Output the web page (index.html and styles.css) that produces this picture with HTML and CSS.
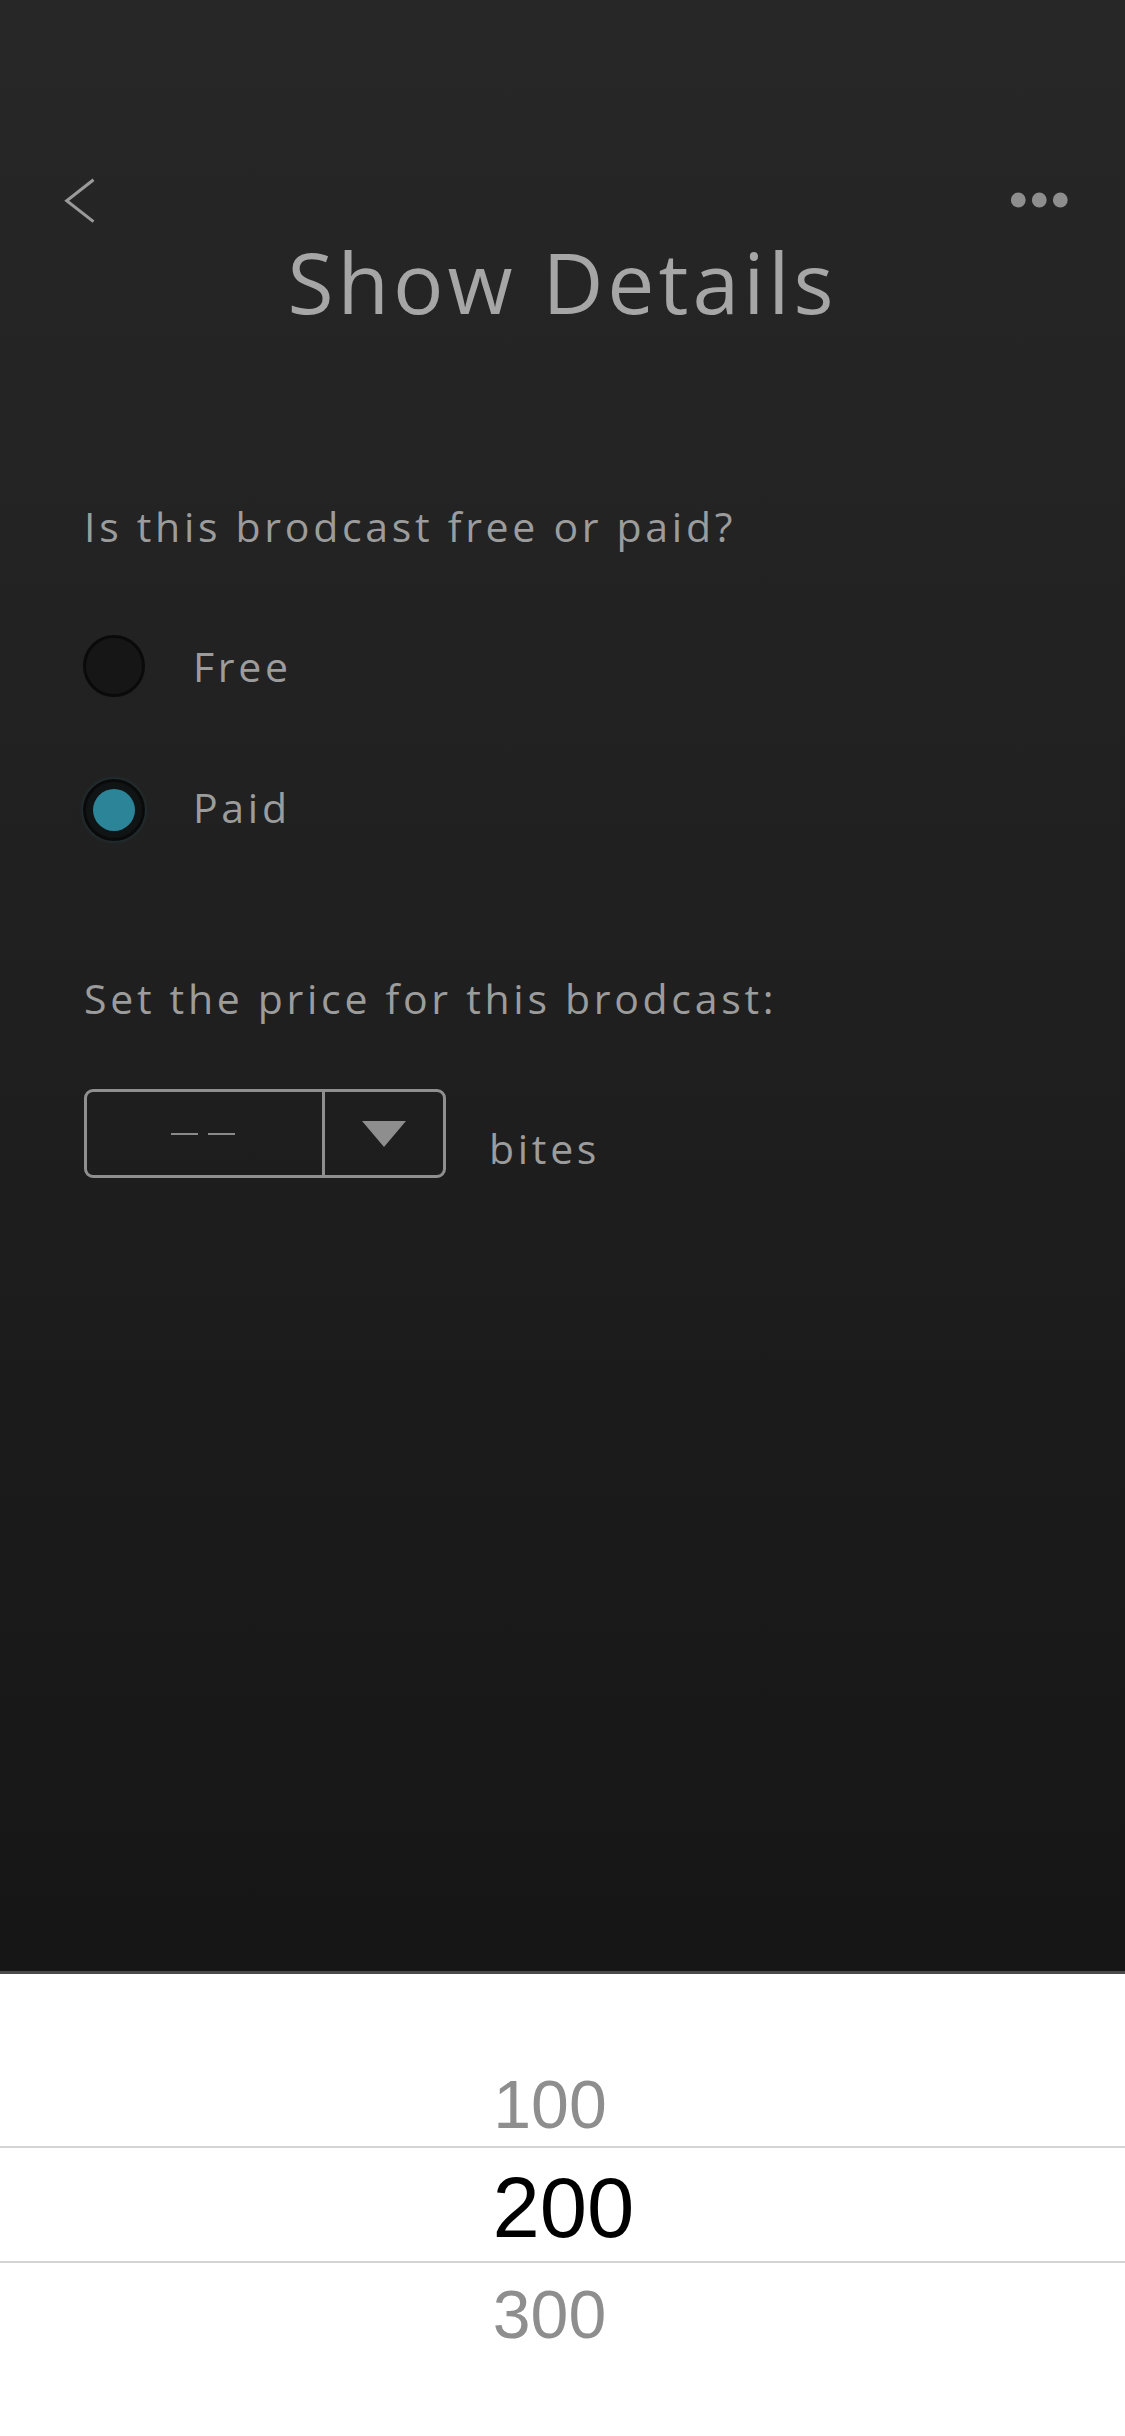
FILE: index.html
```html
<!DOCTYPE html>
<html lang="en">
<head>
<meta charset="utf-8">
<title>Show Details</title>
<link rel="stylesheet" href="styles.css">
</head>
<body>
<div class="screen">
  <main class="main">
    <div class="nav">
      <svg class="back" width="32" height="46" viewBox="0 0 32 46" aria-label="Back">
        <polyline points="28.3,2.7 2.7,22.7 28.3,42.7" fill="none" stroke="#9a9a9a" stroke-width="3" stroke-linecap="square"/>
      </svg>
      <svg class="more" width="60" height="46" viewBox="0 0 60 46" aria-label="More">
        <circle cx="10.3" cy="22" r="7.4" fill="#8e8e8e"/>
        <circle cx="31.3" cy="22" r="7.4" fill="#8e8e8e"/>
        <circle cx="52.3" cy="22" r="7.4" fill="#8e8e8e"/>
      </svg>
    </div>

    <h1 class="title">Show Details</h1>

    <p class="label">Is this brodcast free or paid?</p>

    <div class="options">
      <div class="option">
        <span class="radio"></span>
        <span class="option-text">Free</span>
      </div>
      <div class="option">
        <span class="radio radio-on"><span class="radio-dot"></span></span>
        <span class="option-text option-text-up">Paid</span>
      </div>
    </div>

    <p class="label label-price">Set the price for this brodcast:</p>

    <div class="price-row">
      <div class="select">
        <div class="select-value">
          <span class="dash"></span>
          <span class="dash"></span>
        </div>
        <div class="select-btn">
          <svg width="44" height="26" viewBox="0 0 44 26"><polygon points="0,0 44,0 22,26" fill="#8e8e8e"/></svg>
        </div>
      </div>
      <span class="unit">bites</span>
    </div>
  </main>

  <div class="sep"></div>

  <div class="picker">
    <div class="pick-row pick-above"><span class="pick-num dim">100</span></div>
    <div class="pick-row pick-selected"><span class="pick-num sel">200</span></div>
    <div class="pick-row pick-below"><span class="pick-num dim">300</span></div>
  </div>
</div>
</body>
</html>
```

FILE: styles.css
```css
* { box-sizing: border-box; }

html, body {
  margin: 0;
  padding: 0;
  background: #ffffff;
}

.screen {
  width: 1125px;
  height: 2436px;
  display: flex;
  flex-direction: column;
  overflow: hidden;
  font-family: "Open Sans", "Noto Sans", sans-serif;
}

.main {
  height: 1971px;
  flex: none;
  padding-top: 178px;
  background: linear-gradient(180deg, #272727 0%, #212121 40%, #161616 100%);
  color: #9c9c9c;
}

.nav {
  height: 46px;
  display: flex;
  justify-content: space-between;
  align-items: center;
  padding: 0 57px 0 64px;
}

.nav svg { display: block; }

.title {
  margin: 16px 0 0;
  font-size: 84px;
  line-height: 84px;
  font-weight: 400;
  text-align: center;
  color: #a6a6a6;
  letter-spacing: 4px;
}

.label {
  margin: 182px 0 0 84px;
  font-size: 41px;
  line-height: 41px;
  letter-spacing: 3.7px;
  color: #9c9c9c;
}

.label-price {
  margin-top: 137px;
}

.options {
  margin-top: 88px;
  padding-left: 83px;
  display: flex;
  flex-direction: column;
  gap: 82px;
}

.option {
  height: 62px;
  display: flex;
  align-items: center;
  gap: 48px;
}

.radio {
  width: 62px;
  height: 62px;
  flex: none;
  border-radius: 50%;
  background: #161616;
  border: 3px solid #0a0a0a;
  display: flex;
  align-items: center;
  justify-content: center;
}

.radio-on {
  background: #101415;
  box-shadow: 0 0 4px rgba(40, 120, 140, 0.35);
}

.radio-dot {
  width: 42px;
  height: 42px;
  border-radius: 50%;
  background: #2b8498;
}

.option-text {
  font-size: 41px;
  line-height: 41px;
  letter-spacing: 3.7px;
  color: #9c9c9c;
}

.option-text-up {
  margin-bottom: 6px;
}

.price-row {
  margin: 70px 0 0 84px;
  display: flex;
  align-items: flex-start;
}

.select {
  width: 362px;
  height: 89px;
  border: 3px solid #8f8f8f;
  border-radius: 9px;
  display: flex;
}

.select-value {
  width: 238px;
  border-right: 3px solid #8f8f8f;
  display: flex;
  align-items: center;
  justify-content: center;
  gap: 10px;
  padding-right: 4px;
}

.dash {
  width: 27px;
  height: 2px;
  background: #8a8a8a;
}

.select-btn {
  flex: 1;
  display: flex;
  align-items: center;
  justify-content: center;
}

.select-btn svg { display: block; }

.unit {
  margin: 39px 0 0 43px;
  font-size: 41px;
  line-height: 41px;
  letter-spacing: 3.7px;
  color: #9c9c9c;
}

.sep {
  height: 3px;
  flex: none;
  background: #4a4a4a;
}

.picker {
  flex: 1;
  background: #ffffff;
  font-family: "Liberation Sans", Arial, sans-serif;
}

.pick-row {
  display: flex;
  justify-content: center;
}

.pick-above {
  height: 172px;
  align-items: flex-end;
  padding-bottom: 8px;
  padding-right: 25px;
}

.pick-selected {
  height: 117px;
  border-top: 2px solid #d4d4d4;
  border-bottom: 2px solid #d4d4d4;
  padding-top: 17px;
  padding-left: 2px;
}

.pick-below {
  padding-top: 17px;
  padding-right: 26px;
}

.pick-num {
  display: block;
}

.dim {
  font-size: 68px;
  line-height: 68px;
  color: #8e8e8e;
}

.sel {
  font-size: 85px;
  line-height: 85px;
  color: #000000;
}
```
